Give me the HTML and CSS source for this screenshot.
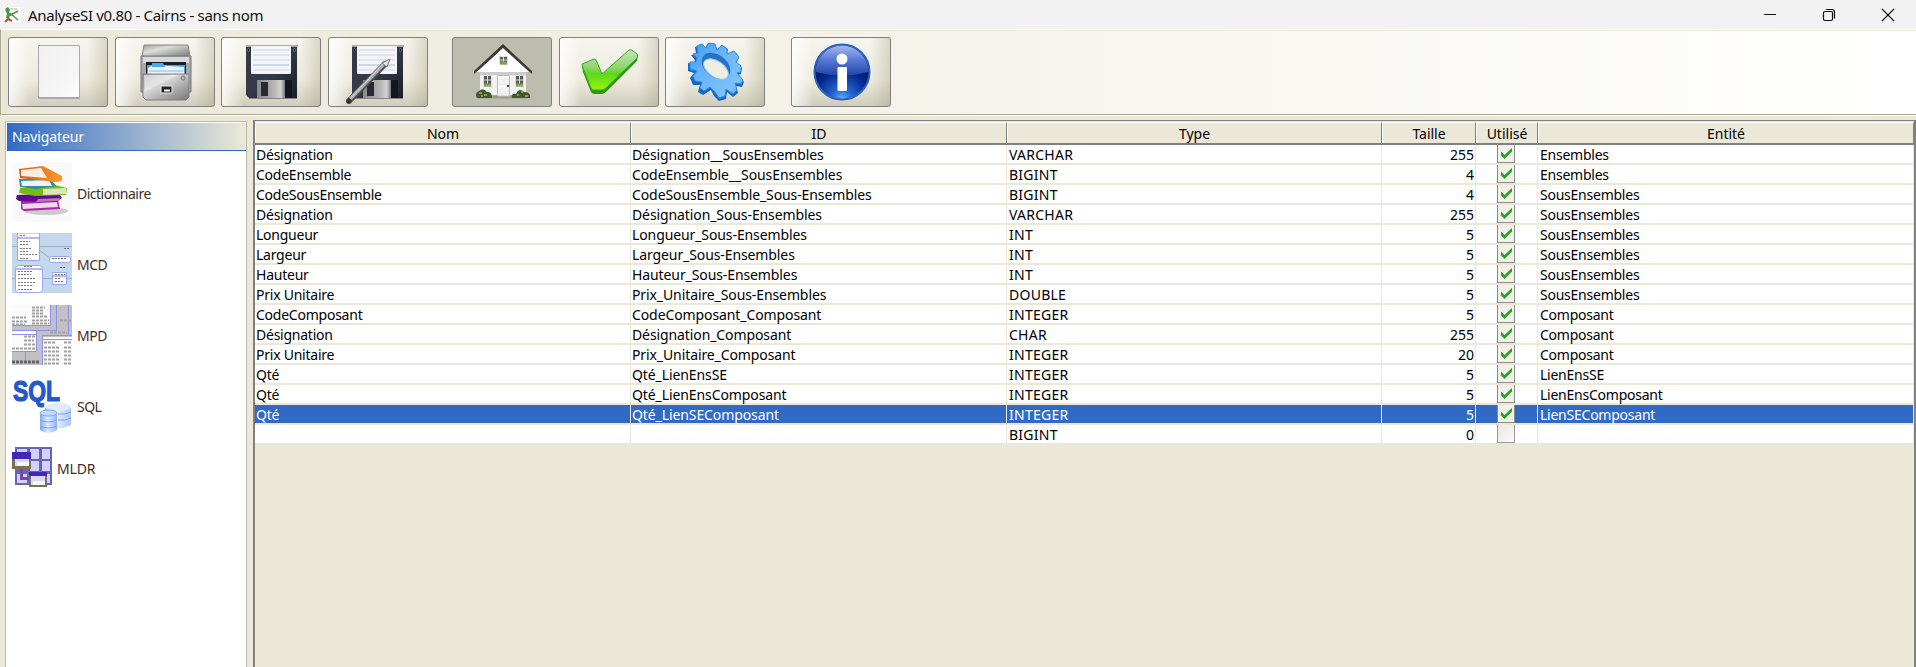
FILE: index.html
```
<!DOCTYPE html>
<html lang="fr">
<head>
<meta charset="utf-8">
<title>AnalyseSI v0.80 - Cairns - sans nom</title>
<link rel="stylesheet" href="styles.css">
</head>
<body>
<svg class="defs" width="0" height="0">
  <defs>
    <linearGradient id="paper" x1="0" y1="0" x2="1" y2="1"><stop offset="0" stop-color="#f1f1f1"/><stop offset=".75" stop-color="#f6f6f6"/><stop offset="1" stop-color="#fff"/></linearGradient>
    <linearGradient id="steel" x1="0" y1="0" x2="1" y2="1"><stop offset="0" stop-color="#9d9d9d"/><stop offset=".35" stop-color="#dcdcdc"/><stop offset=".65" stop-color="#acacac"/><stop offset="1" stop-color="#777"/></linearGradient>
    <linearGradient id="shutter" x1="0" y1="0" x2="1" y2="0"><stop offset="0" stop-color="#888"/><stop offset=".6" stop-color="#b5b5b5"/><stop offset=".85" stop-color="#d2d2d2"/><stop offset="1" stop-color="#777"/></linearGradient>
    <linearGradient id="disk" x1="0" y1="0" x2="1" y2="1"><stop offset="0" stop-color="#343844"/><stop offset=".5" stop-color="#343a4a"/><stop offset="1" stop-color="#1b1e26"/></linearGradient>
    <linearGradient id="green" x1="0" y1="0" x2="0" y2="1"><stop offset="0" stop-color="#c5e5bd"/><stop offset=".45" stop-color="#8fd56a"/><stop offset=".6" stop-color="#5ad81c"/><stop offset="1" stop-color="#9cf30a"/></linearGradient>
    <linearGradient id="gear" x1="0" y1="0" x2="1" y2="1"><stop offset="0" stop-color="#3e9df2"/><stop offset=".45" stop-color="#6bb7f8"/><stop offset=".8" stop-color="#7cc2fb"/><stop offset="1" stop-color="#4486d0"/></linearGradient>
    <linearGradient id="infoTop" x1="0" y1="0" x2="0" y2="1"><stop offset="0" stop-color="#a4b9f2"/><stop offset=".5" stop-color="#5577d4"/><stop offset="1" stop-color="#2344a6"/></linearGradient>
    <radialGradient id="infoLow" cx=".5" cy="1" r=".75"><stop offset="0" stop-color="#62b4ff"/><stop offset=".25" stop-color="#2468d0"/><stop offset=".65" stop-color="#062a92"/><stop offset="1" stop-color="#02124e"/></radialGradient>
    <linearGradient id="orange" x1="0" y1="0" x2="1" y2="0"><stop offset="0" stop-color="#d95a12"/><stop offset="1" stop-color="#f99a2c"/></linearGradient>
    <linearGradient id="can" x1="0" y1="0" x2="1" y2="0"><stop offset="0" stop-color="#7fa8f8"/><stop offset=".45" stop-color="#deebff"/><stop offset="1" stop-color="#8fb3fa"/></linearGradient>
    <symbol id="floppy" viewBox="0 0 54 56">
      <path d="M2 1H52V54H4L1 51V2Z" fill="url(#disk)"/>
      <path d="M1 1H53V3H1Z" fill="#aaa"/>
      <path d="M6 2H46V29Q46 30 45 30H7Q6 30 6 29Z" fill="#f2f4f8"/>
      <path d="M8 6H44M8 11H44M8 16H44M8 26H44" stroke="#d3d6dc"/>
      <path d="M8 21H44" stroke="#a9bfdd"/>
      <path d="M2.500 4.500h2v3h-2zM48.500 4.500h2v3h-2z" fill="#111" stroke="#555"/>
      <path d="M12 36H47V54H12Z" fill="#13161d"/>
      <path d="M12 36H40V54H12Z" fill="url(#shutter)"/>
      <path d="M16 38H23V52H16Z" fill="#252a35"/>
      <path d="M4 54.500H52" stroke="#858585"/>
    </symbol>
    <symbol id="tick" viewBox="0 0 18 18">
      <rect width="18" height="18" fill="#f2f1e8"/>
      <path d="M.5 18V0M0 17.500H18M17.500 0V18" fill="none" stroke="#8b8b8b"/>
      <path d="M4 6.500V10.500L7.500 14L15 6.500V3L7.500 10Z" fill="#26a026"/>
    </symbol>
  </defs>
</svg>

<header class="titlebar">
  <svg class="app-icon" width="16" height="16" viewBox="0 0 16 16"><rect width="16" height="16" fill="#fff"/><path d="M1 2L4 0L6 3L5 6L8 7L5 9L6 13L2 11L3 7Z" fill="#43964a"/><path d="M6 6L14 13M5 9L14 4" stroke="#4d9c43" stroke-width="1.500"/><path d="M6 2H13" stroke="#aaa"/><path d="M1 15L4 12L8 14" stroke="#b35645" stroke-width="2" fill="none"/></svg>
  <h1 class="title">AnalyseSI v0.80 - Cairns - sans nom</h1>
  <div class="window-controls">
    <svg width="14" height="14" viewBox="0 0 14 14"><path d="M1 6.500H13" stroke="#111"/></svg>
    <svg width="14" height="14" viewBox="0 0 14 14" fill="none" stroke="#111" stroke-width="1.200"><rect x="1.500" y="3.500" width="9" height="9" rx="1.500"/><path d="M4 1.500H10Q12.500 1.500 12.500 4V10.500"/></svg>
    <svg width="14" height="14" viewBox="0 0 14 14"><path d="M1 1L13 13M13 1L1 13" stroke="#111" stroke-width="1.200"/></svg>
  </div>
</header>

<div class="toolbar">
  <button class="tool" aria-label="Nouveau"><svg width="44" height="56" viewBox="0 0 44 56"><path d="M1.500 1.500H42.500V54.500H1.500Z" fill="url(#paper)" stroke="#aaa"/><path d="M1 54H43" stroke="#aaa" stroke-width="2"/></svg></button>
  <button class="tool" aria-label="Ouvrir"><svg width="52" height="58" viewBox="0 0 52 58">
    <path d="M4 2H48L50 14H2Z" fill="url(#steel)" stroke="#888"/><path d="M1 13H51V49H1Z" fill="#a8a8a8" stroke="#777"/><path d="M3 14H49V20H3Z" fill="#d8d8d8"/>
    <path d="M6 19H46V31H6Z" fill="#17202a"/><path d="M7 22H45V31H7Z" fill="#4aa3e2"/><path d="M8 25L13 22L44 24V31H8Z" fill="#e7f4fd"/><path d="M12 20H23L25 24H12Z" fill="#47a9ee"/><path d="M9 28H43" stroke="#74bde9"/>
    <path d="M3 31H49V54L46 57H6L3 54Z" fill="url(#steel)" stroke="#808080"/><path d="M4 32H38L5 48Z" fill="#eee" opacity=".6"/><path d="M21 43H32V50H21Z" fill="#222" stroke="#eee"/><path d="M24 47.500H30" stroke="#fff" stroke-width="2"/><circle cx="43" cy="35" r="2" fill="#bbb" stroke="#777"/></svg></button>
  <button class="tool" aria-label="Enregistrer"><svg width="54" height="56"><use href="#floppy"/></svg></button>
  <button class="tool tool-saveas" aria-label="Enregistrer sous"><svg width="60" height="60" viewBox="0 0 60 60"><use href="#floppy" x="6" y="0" width="54" height="56"/><path d="M4 57L40 20" stroke="#4e4e4e" stroke-width="6" stroke-linecap="round"/><path d="M5 55L40 19" stroke="#aaa" stroke-width="3.500"/><path d="M6 54L40 18" stroke="#ddd"/><path d="M37 19L45 15L42 23Z" fill="#e4e4e4" stroke="#777"/><circle cx="4" cy="57" r="2.500" fill="#333"/></svg></button>
  <button class="tool tool-home" aria-label="Accueil"><svg width="60" height="58" viewBox="0 0 60 58">
    <path d="M5 54H56" stroke="#999b8d" stroke-width="3"/><path d="M7 27L30 5L53 27V52H7Z" fill="#f2f2f2"/><path d="M7 29H53V32H7Z" fill="#ccc"/><path d="M1 28L30 1L59 28V31L30 6L1 31Z" fill="#403932"/><path d="M4 29L30 5L56 29Z" fill="#fff"/>
    <path d="M26.500 13.500h8v8h-8zM10.500 32.500h8v11h-8zM42.500 32.500h8v11h-8z" fill="#545b59" stroke="#ddd"/><path d="M30.500 14V21M27 17H34M14.500 33V41M11 37H18M46.500 33V41M43 37H50" stroke="#ddd"/><path d="M27 20H34M11 42H18M43 42H50" stroke="#7fa04c" stroke-width="3"/>
    <path d="M24.500 32.500H36.500V53H24.500Z" fill="#fcfcfc" stroke="#bbb"/><path d="M27 36h3v6h-3zM32 36h3v6h-3zM27 45h3v6h-3zM32 45h3v6h-3z" fill="none" stroke="#e3e3e3"/><circle cx="35" cy="43" r="1"/>
    <path d="M4 55Q1 50 6 48Q10 44 14 49Q19 48 19 55ZM39 55Q38 50 43 51Q46 44 51 49Q58 49 57 55Z" fill="#42592a"/><path d="M6 50h3m2 2h3m-6 1h2M44 52h2m2-3h2m2 4h3" stroke="#86a053" stroke-width="2"/></svg></button>
  <button class="tool" aria-label="Valider"><svg width="60" height="50" viewBox="0 0 60 50"><path d="M2 18L3 25L11 45Q12 47 15 47H22Q24 47 27 44L57 14L58 8L52 7L20 31L15 13Z" fill="#2e9714"/><path d="M2 17L14 12Q16 12 17 15L22 27L49 3Q51 2 53 4L57 7Q58 9 57 11L26 41Q24 43 21 43H14Q12 43 11 41L3 21Z" fill="url(#green)" stroke="#39a522"/></svg></button>
  <button class="tool" aria-label="Options"><svg width="60" height="60" viewBox="0 0 60 60">
    <path d="M5 13L10 12L9 5L15 2L19 6L22 1L29 2L31 7L36 3L42 7L41 12L48 10L53 16L50 21L56 26L55 32L52 33L58 40L56 45L50 44L52 51L47 55L41 50L40 57L33 59L28 54L25 48L17 53L12 50L14 43L7 43L4 36L8 31L2 29L2 21L8 22L9 18Z" fill="#1269c5"/>
    <path d="M7 12L12 11L11 4L16 2L20 6L23 1L29 2L31 8L36 3L41 7L41 12L48 9L53 15L50 20L55 24L55 30L51 31L57 38L55 42L49 41L51 48L47 52L40 47L39 54L33 56L29 50L24 45L18 49L14 46L16 40L9 39L7 34L11 29L4 27L4 20L10 20L11 16Z" fill="url(#gear)" stroke="#3789de"/><ellipse cx="30" cy="24" rx="16" ry="11" transform="rotate(38 30 24)" fill="#2772c8"/><ellipse cx="30" cy="27" rx="14" ry="8" transform="rotate(35 30 27)" fill="#efede2" stroke="#8bc5f9"/></svg></button>
  <button class="tool tool-info" aria-label="À propos"><svg width="60" height="60" viewBox="0 0 60 60"><circle cx="30" cy="30" r="27.500" fill="url(#infoLow)" stroke="#2b62bf" stroke-width="2"/><path d="M3.500 30A26.500 26.500 0 0 1 56.500 30Q30 37 3.500 30Z" fill="url(#infoTop)"/><circle cx="30" cy="17" r="5.500" fill="#fff"/><rect x="25.500" y="25" width="9.500" height="24" rx="1" fill="#fff"/></svg></button>
</div>

<div class="workspace">
  <nav class="navigator">
    <h2 class="nav-title">Navigateur</h2>
    <ul class="nav-list">
      <li class="nav-item"><svg width="60" height="60" viewBox="0 0 60 60"><rect width="60" height="60" fill="#faf9f9"/><ellipse cx="34" cy="49" rx="22" ry="4" fill="#ccc"/><path d="M9 39L46 38L48 47L12 49L9 47Z" fill="#a828a5"/><path d="M10 42L45 40L46 45L11 47Z" fill="#efd9ed"/><path d="M5 33L47 31L50 36L45 40L7 39L4 37Z" fill="#61098f"/><path d="M26 37L48 36L47 39L24 40Z" fill="#ba75bd"/><path d="M8 26L43 23L55 26L54 33L23 34L7 31Z" fill="#79b914"/><path d="M31 27L54 26V32L31 33Z" fill="#d9e5c2"/><path d="M7 17L38 16L44 24L24 27L8 25Z" fill="#308cac"/><path d="M9 19L37 18L40 24L10 24Z" fill="#eef2f2"/><path d="M7 7L31 4L50 14V19L44 20L8 16Z" fill="url(#orange)"/><path d="M9 8L29 6L35 16L9 14Z" fill="#f7eee4"/></svg><span>Dictionnaire</span></li>
      <li class="nav-item"><svg width="60" height="60" viewBox="0 0 60 60"><rect width="60" height="60" fill="#c3d7ed"/><path d="M0 13.500H60M0 45.500H60M27 17L38 25" stroke="#9dafc8"/><g fill="#fff" stroke="#9aa5f4"><path d="M5.500 0H27.500V27.500H5.500Z"/><rect x="3.500" y="32.500" width="27" height="27" rx="3"/><rect x="37.500" y="23.500" width="21" height="6" rx="2"/><path d="M40.500 39.500H54.500V51.500H40.500Z"/></g><path d="M6 5H27M4 36H30M41 43H54" stroke="#b5b7fa" stroke-width="2"/><path d="M8 2.500h5M8 8.500h10M8 11.500h9M8 15.500h12M8 18.500h9M8 21.500h18M8 25.500h9M12 33.500h9M6 38.500h15M6 41.500h13M6 45.500h17M6 49.500h18M6 52.500h15M6 56.500h15M40 25.500h14M43 41.500h10M43 45.500h6M43 48.500h9M52 15.500h5M48 34.500h5" stroke="#777" stroke-dasharray="2 1"/></svg><span>MCD</span></li>
      <li class="nav-item"><svg width="60" height="60" viewBox="0 0 60 60"><rect width="60" height="60" fill="#c1c1c5"/><path d="M0 0H38V20H0ZM0 26H24V46H0ZM30 32H60V60H30Z" fill="#fafafa"/><path d="M38.500 0V20.500H0M44.500 0V25.500H0M56.500 0V30M24.500 26V46.500H0M30.500 60V30.500H60M13.500 47V56M0 29.500H24M30 34.500H60" fill="none" stroke="#8f90ed"/><path d="M20 2.500h13M20 5.500h11M20 8.500h12M0 12.500h14M20 11.500h16M0 16.500h15M20 15.500h17M0 19.500h13M20 18.500h17M12 31.500h11M12 35.500h10M12 39.500h12M0 43.500h24M38 27.500h17M48 15.500h12M32 37.500h11M52 37.500h8M32 42.500h16M52 42.500h8M32 46.500h16M52 46.500h8M32 50.500h15M52 50.500h8M32 54.500h16M52 54.500h8M32 58.500h16M52 58.500h8" stroke="#a2a2a2" stroke-width="2" stroke-dasharray="3 1"/><path d="M0 57H27" stroke="#636363" stroke-width="3" stroke-dasharray="3 1"/></svg><span>MPD</span></li>
      <li class="nav-item"><svg width="60" height="60" viewBox="0 0 60 60"><text class="sql-logo" x="1" y="25" textLength="47" lengthAdjust="spacingAndGlyphs">SQL</text><path d="M33 32V49Q46 56 59 49V32Z" fill="url(#can)" opacity=".75"/><ellipse cx="46" cy="31" rx="13" ry="4" fill="#e0ebff"/><path d="M28 37V54Q36 60 45 54V37Z" fill="url(#can)"/><ellipse cx="36.500" cy="37" rx="8.500" ry="3" fill="#c5d9ff" stroke="#81a7f5"/><path d="M28 44Q36 48 45 44M28 50Q36 54 45 50M46 38Q53 39 59 36M46 44Q53 45 59 42" fill="none" stroke="#7aa0ef"/></svg><span>SQL</span></li>
      <li class="nav-item nav-item-small"><svg width="40" height="40" viewBox="0 0 40 40" shape-rendering="crispEdges"><path d="M3 0H40V38H3Z" fill="#6664bd"/><path d="M5 2H15V12H5ZM18 2H27V12H18ZM30 2H38V12H30ZM18 14H27V24H18ZM30 14H38V24H30ZM5 27H15V36H5ZM18 27H27V36H18ZM30 27H38V36H30Z" fill="#d2d0ff"/><path d="M8 22H11V30H17V33H8Z" fill="#7548a6"/><path d="M0 5H19V22H0Z" fill="#7c704e"/><path d="M0 5H19V12H0Z" fill="#4328b5"/><path d="M3 12H17V19H3Z" fill="#ddd6fb"/><path d="M5 15H17V19H5Z" fill="#eef9fa"/><path d="M17 25H35V40H17Z" fill="#7c704e"/><path d="M17 25H35V29H17Z" fill="#4328b5"/><path d="M19 29H33V38H19Z" fill="#ddd6fb"/><path d="M21 34H33V38H21Z" fill="#eef9fa"/></svg><span>MLDR</span></li>
    </ul>
  </nav>

  <main class="table">
    <div class="row head"><span>Nom</span><span>ID</span><span>Type</span><span>Taille</span><span>Utilisé</span><span>Entité</span></div>
    <div class="row"><span>Désignation</span><span class="id">Désignation__SousEnsembles</span><span class="type">VARCHAR</span><span class="num">255</span><span class="check"><svg><use href="#tick"/></svg></span><span>Ensembles</span></div>
    <div class="row"><span>CodeEnsemble</span><span class="id">CodeEnsemble__SousEnsembles</span><span class="type">BIGINT</span><span class="num">4</span><span class="check"><svg><use href="#tick"/></svg></span><span>Ensembles</span></div>
    <div class="row"><span>CodeSousEnsemble</span><span class="id">CodeSousEnsemble_Sous-Ensembles</span><span class="type">BIGINT</span><span class="num">4</span><span class="check"><svg><use href="#tick"/></svg></span><span>SousEnsembles</span></div>
    <div class="row"><span>Désignation</span><span class="id">Désignation_Sous-Ensembles</span><span class="type">VARCHAR</span><span class="num">255</span><span class="check"><svg><use href="#tick"/></svg></span><span>SousEnsembles</span></div>
    <div class="row"><span>Longueur</span><span class="id">Longueur_Sous-Ensembles</span><span class="type">INT</span><span class="num">5</span><span class="check"><svg><use href="#tick"/></svg></span><span>SousEnsembles</span></div>
    <div class="row"><span>Largeur</span><span class="id">Largeur_Sous-Ensembles</span><span class="type">INT</span><span class="num">5</span><span class="check"><svg><use href="#tick"/></svg></span><span>SousEnsembles</span></div>
    <div class="row"><span>Hauteur</span><span class="id">Hauteur_Sous-Ensembles</span><span class="type">INT</span><span class="num">5</span><span class="check"><svg><use href="#tick"/></svg></span><span>SousEnsembles</span></div>
    <div class="row"><span>Prix Unitaire</span><span class="id">Prix_Unitaire_Sous-Ensembles</span><span class="type">DOUBLE</span><span class="num">5</span><span class="check"><svg><use href="#tick"/></svg></span><span>SousEnsembles</span></div>
    <div class="row"><span>CodeComposant</span><span class="id">CodeComposant_Composant</span><span class="type">INTEGER</span><span class="num">5</span><span class="check"><svg><use href="#tick"/></svg></span><span>Composant</span></div>
    <div class="row"><span>Désignation</span><span class="id">Désignation_Composant</span><span class="type">CHAR</span><span class="num">255</span><span class="check"><svg><use href="#tick"/></svg></span><span>Composant</span></div>
    <div class="row"><span>Prix Unitaire</span><span class="id">Prix_Unitaire_Composant</span><span class="type">INTEGER</span><span class="num">20</span><span class="check"><svg><use href="#tick"/></svg></span><span>Composant</span></div>
    <div class="row"><span>Qté</span><span class="id">Qté_LienEnsSE</span><span class="type">INTEGER</span><span class="num">5</span><span class="check"><svg><use href="#tick"/></svg></span><span>LienEnsSE</span></div>
    <div class="row"><span>Qté</span><span class="id">Qté_LienEnsComposant</span><span class="type">INTEGER</span><span class="num">5</span><span class="check"><svg><use href="#tick"/></svg></span><span>LienEnsComposant</span></div>
    <div class="row selected"><span>Qté</span><span class="id">Qté_LienSEComposant</span><span class="type">INTEGER</span><span class="num">5</span><span class="check"><svg><use href="#tick"/></svg></span><span>LienSEComposant</span></div>
    <div class="row"><span></span><span class="id"></span><span class="type">BIGINT</span><span class="num">0</span><span class="check"><i class="unchecked"></i></span><span></span></div>
  </main>
</div>
</body>
</html>
```
FILE: styles.css
```
* { box-sizing: border-box; }
body {
  margin: 0;
  height: 667px;
  overflow: hidden;
  display: flex;
  flex-direction: column;
  background: #ebe8d8;
  font: 14px/20px "Noto Sans", "Open Sans", sans-serif;
  letter-spacing: -0.24px;
  color: #000;
}
.defs { position: absolute; }
svg { display: block; flex: none; }

.titlebar {
  height: 29px;
  flex: none;
  display: flex;
  align-items: center;
  padding: 0 21px 0 4px;
  background: #f2f2f2;
}
.title { margin: 0 0 0 8px; font-size: 15px; font-weight: 400; letter-spacing: -0.34px; color: #111; }
.window-controls { margin-left: auto; display: flex; gap: 45px; }

.toolbar {
  height: 87px;
  flex: none;
  display: flex;
  align-items: flex-start;
  gap: 6.500px;
  padding: 7px 0 0 7px;
  border-top: 1px solid #fff;
  border-left: 1px solid #aaa897;
  border-bottom: 1px solid #fff;
  box-shadow: inset 0 -1px #aaa897, inset 1px 1px #ece9d8;
  background: linear-gradient(90deg, #ebe8d8, #fff);
}
.tool {
  width: 100px;
  height: 70px;
  display: flex;
  align-items: center;
  justify-content: center;
  padding: 0 0 0 2px;
  border: 1px solid #808080;
  border-radius: 3px;
  background:
    linear-gradient(90deg, #fffc 0, #fff0 22%, #fff0 80%, #8b876044 100%),
    linear-gradient(#f5f4ee, #eeecdf 60%, #d1cdbd);
}
.tool-saveas svg { margin-left: -8px; margin-top: 4px; }
.tool-home { margin-left: 18px; background: #bcbdae; }
.tool-info { margin-left: 19px; }

.workspace { flex: 1; min-height: 0; display: flex; gap: 6px; padding: 4px 0 0 5px; }
.navigator {
  width: 242px;
  flex: none;
  margin-top: 1px;
  border: 1px solid #b8b9aa;
  border-bottom: 0;
  box-shadow: inset 1px 1px #fff;
  background: #fff;
}
.nav-title {
  height: 28px;
  margin: 1px 0 0 1px;
  padding-left: 5px;
  border-bottom: 1px solid #316ac5;
  background: linear-gradient(90deg, #316ac5, #ece9d8);
  color: #fff;
  font-size: 14px;
  font-weight: 400;
  line-height: 28px;
  letter-spacing: -0.1px;
}
.nav-list { margin: 0; padding: 11px 6px; list-style: none; display: flex; flex-direction: column; gap: 11.300px; }
.nav-item { display: flex; align-items: center; gap: 5px; height: 60px; color: #442b2b; letter-spacing: -0.5px; }
.nav-item span { padding-top: 3px; }
.nav-item-small { height: 40px; letter-spacing: -0.2px; }
.sql-logo { font: bold 29px "Liberation Sans", sans-serif; fill: #2458cc; stroke: #2458cc; stroke-width: 1.200px; letter-spacing: 0; }

.table { flex: 1; border: 2px solid #808080; border-width: 1px 2px 0; padding-top: 1px; }
.row {
  display: grid;
  grid-template-columns: 376px 376px 375px 94px 62px 1fr;
  height: 20px;
  border-bottom: 2px solid #ebe8d8;
}
.row > span {
  padding-left: 1px;
  border-right: 1px solid #ebe8d8;
  background: #fff;
  white-space: nowrap;
  height: 18px;
}
.row > span:last-child { padding-left: 2px; }
.row > .id { letter-spacing: -0.1px; }
.row > .type { padding-left: 2px; letter-spacing: 0.25px; }
.head { height: 23px; border-bottom: 2px solid #808080; }
.head > span, .head > span:last-child {
  height: 21px;
  padding: 0;
  border-right: 1px solid #808080;
  border-left: 1px solid #fff;
  border-top: 1px solid #fff;
  background: #ebe8d8;
  line-height: 22px;
  text-align: center;
  letter-spacing: 0;
}
.row > .num { text-align: right; padding-right: 1px; letter-spacing: 0; }
.row > .check { display: flex; justify-content: center; padding: 0 1px 0 0; }
.check svg, .unchecked { width: 18px; height: 18px; }
.unchecked { border: 1px solid #999; border-top: 0; background: linear-gradient(135deg, #e9e7db, #fafafa); }
.selected > span { background: #316ac5; color: #fff; }
```
